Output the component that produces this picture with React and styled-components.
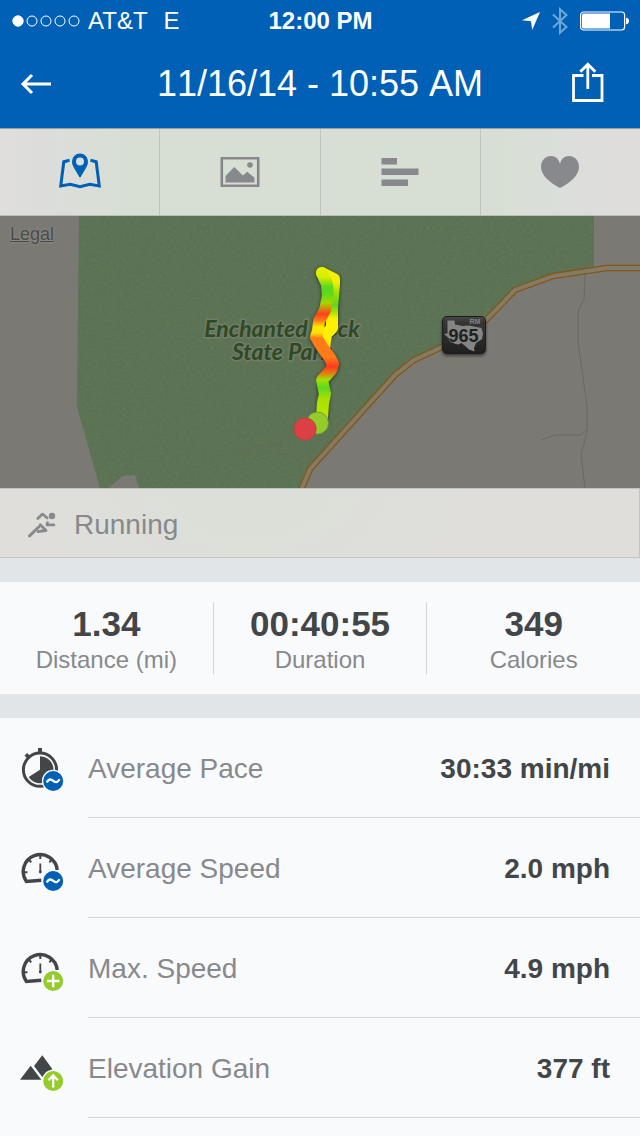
import React from 'react';
import styled, { createGlobalStyle } from 'styled-components';

const GlobalStyle = createGlobalStyle`
  * {
    box-sizing: border-box;
  }
  body {
    margin: 0;
    background: #f9fafc;
    font-family: 'Liberation Sans', Arial, sans-serif;
  }
  button {
    margin: 0;
    padding: 0;
    border: 0;
    background: none;
    color: inherit;
    font: inherit;
    cursor: pointer;
  }
  svg {
    display: block;
    flex-shrink: 0;
  }
`;

const Page = styled.div`
  display: flex;
  flex-direction: column;
  background: #e1e5e8;
  min-height: 100vh;
`;

const Header = styled.header`
  background: #0060b6;
  color: #ffffff;
`;

const StatusBar = styled.div`
  display: grid;
  grid-template-columns: 1fr auto 1fr;
  align-items: center;
  height: 40px;
  padding: 2px 11px 0 12px;
  font-size: 24px;
  line-height: 36px;
  .carrier {
    display: flex;
    align-items: center;
    gap: 8px;
  }
  .network {
    margin-left: 8px;
  }
  .time {
    font-weight: 700;
  }
  .indicators {
    display: flex;
    align-items: center;
    justify-content: flex-end;
    gap: 12px;
  }
`;

const NavBar = styled.div`
  display: grid;
  grid-template-columns: 1fr auto 1fr;
  align-items: center;
  height: 88px;
  padding: 0 36px 0 20px;
`;

const Title = styled.h1`
  margin: 0;
  padding-left: 16px;
  font-size: 36px;
  font-weight: 400;
  line-height: 44px;
  font-kerning: none;
`;

const NavButton = styled.button`
  justify-self: ${({ $end }) => ($end ? 'end' : 'start')};
`;

const Tabs = styled.nav`
  display: flex;
  height: 88px;
  border-top: 1px solid #9c9f99;
  border-bottom: 1px solid #b9beb6;
  background: linear-gradient(
    90deg,
    #dfdedc 0%,
    #dcdddb 6%,
    #d7dfd4 20%,
    #d7dfd4 78%,
    #dbdeda 88%,
    #dedddc 96%
  );
`;

const Tab = styled.button`
  display: flex;
  flex: 1;
  align-items: center;
  justify-content: center;
  color: ${({ $active }) => ($active ? '#0060b6' : '#87898c')};
  border-right: 1px solid #bfc4bd;
  &:last-child {
    border-right: 0;
  }
`;

const MapWrapper = styled.section`
  position: relative;
  height: 272px;
  overflow: hidden;
  background: #7b7974;
  .legal {
    position: absolute;
    left: 10px;
    top: 8px;
    font-size: 18px;
    line-height: 20px;
    color: #4a4946;
    text-shadow: 0 0 2px #a3a19c;
  }
`;

const Activity = styled.div`
  display: flex;
  align-items: center;
  gap: 18px;
  height: 70px;
  padding: 4px 0 0 28px;
  border: 1px solid #c3c4c4;
  border-left: 0;
  background: radial-gradient(
    ellipse 220px 130px at 250px 0,
    #dbdfd7,
    #dfdedb
  );
  color: #87898c;
  font-size: 28px;
  line-height: 36px;
`;

const Stats = styled.section`
  display: flex;
  margin: 24px 0;
  padding: 20px 0;
  background: #f9fafc;
`;

const Stat = styled.div`
  flex: 1;
  text-align: center;
  border-right: 1px solid #d3d6d9;
  &:last-child {
    border-right: 0;
  }
  .value {
    font-size: 35px;
    font-weight: 700;
    line-height: 44px;
    color: #424648;
  }
  .label {
    font-size: 24px;
    line-height: 28px;
    color: #87898c;
  }
`;

const Details = styled.section`
  flex: 1;
  background: #f9fafc;
`;

const DetailRow = styled.div`
  display: flex;
  align-items: center;
  gap: 24px;
  padding: 2px 0 0 20px;
  .content {
    display: flex;
    flex: 1;
    align-items: center;
    justify-content: space-between;
    height: 98px;
    padding-right: 30px;
    border-bottom: 1px solid #d3d6d9;
    font-size: 28px;
    color: #87898c;
  }
  .value {
    font-weight: 700;
    color: #424648;
  }
`;

const SignalDots = () => (
  <svg width="68" height="12" viewBox="0 0 68 12" fill="none" stroke="#fff">
    <circle cx="6" cy="6" r="5.2" fill="#fff" />
    <circle cx="20" cy="6" r="5" />
    <circle cx="34" cy="6" r="5" />
    <circle cx="48" cy="6" r="5" />
    <circle cx="62" cy="6" r="5" />
  </svg>
);

const LocationArrow = () => (
  <svg width="18" height="18" viewBox="0 0 18 18">
    <path d="M0 8.3 18 0 10.2 18 9 9.2z" fill="#fff" />
  </svg>
);

const Bluetooth = () => (
  <svg width="16" height="28" viewBox="0 0 16 28">
    <path
      d="M1 7.5 14.5 20 8 25.8V2.2L14.5 8 1 20.5"
      fill="none"
      stroke="#6fa6d8"
      strokeWidth="2"
    />
  </svg>
);

const Battery = () => (
  <svg width="49" height="20" viewBox="0 0 49 20">
    <rect
      x=".6"
      y="1"
      width="44"
      height="18"
      rx="3"
      fill="none"
      stroke="#fff"
      strokeWidth="1.2"
    />
    <path d="M3.5 2.5H30v15H3.5A1.5 1.5 0 0 1 2 16V4a1.5 1.5 0 0 1 1.5-1.500z" fill="#fff" />
    <path d="M46 6.700c4 0 4 6.600 0 6.600z" fill="#fff" />
  </svg>
);

const BackArrow = () => (
  <svg width="34" height="22" viewBox="0 0 34 22">
    <path
      d="M31 11H3M12 2 3 11l9 9"
      fill="none"
      stroke="#fff"
      strokeWidth="3"
    />
  </svg>
);

const ShareIcon = () => (
  <svg width="32" height="44" viewBox="0 0 32 44">
    <path
      d="M11.500 13.500H1.500v25h28.500v-25h-10M15.800 27V2.500M8.300 9.800l7.500-7.500 7.500 7.500"
      fill="none"
      stroke="#fff"
      strokeWidth="2.800"
    />
  </svg>
);

const MapIcon = () => (
  <svg width="42" height="38" viewBox="0 0 42 38">
    <path
      d="M10.500 7.300 4.800 8.800 1.700 33l9.600-1.800L21 33.600l9.700-2.400 9.600 1.800L37.200 8.800l-5.700-1.500"
      fill="none"
      stroke="currentColor"
      strokeWidth="3"
    />
    <path
      fillRule="evenodd"
      d="M21 .4a8 8 0 0 0-8 8c0 3 1 4.600 2.300 7L21 25l5.700-9.600c1.300-2.400 2.300-4 2.300-7a8 8 0 0 0-8-8zm0 4a4 4 0 1 1 0 8 4 4 0 0 1 0-8z"
      fill="currentColor"
    />
  </svg>
);

const PhotoIcon = () => (
  <svg width="40" height="30" viewBox="0 0 40 30" fill="currentColor">
    <rect
      x="1.800"
      y="1.200"
      width="36.400"
      height="27.600"
      fill="none"
      stroke="currentColor"
      strokeWidth="2.600"
    />
    <path d="M5.500 25.500V19l8.800-9 8.600 8.500 4.400-3.800 7.200 6v4.800z" />
    <circle cx="30" cy="8" r="2.800" />
  </svg>
);

const BarsIcon = () => (
  <svg width="38" height="28" viewBox="0 0 38 28" fill="currentColor">
    <path d="M.5 0H16v6.500H.5zM.5 10.500h37V17H.5zM.5 21.500h26.500V28H.5z" />
  </svg>
);

const HeartIcon = () => (
  <svg width="38" height="32" viewBox="0 0 38 32">
    <path
      d="M19 32C9 27 0 19.500 0 10.800 0 4.500 4.500 0 10 0c4.500 0 8 2.800 9 8.200C20 2.800 23.500 0 28 0c5.500 0 10 4.500 10 10.800C38 19.500 29 27 19 32z"
      fill="currentColor"
    />
  </svg>
);

const RunnerIcon = () => (
  <svg
    width="28"
    height="26"
    viewBox="0 0 28 26"
    fill="none"
    stroke="currentColor"
    strokeWidth="2.600"
    strokeLinecap="round"
    strokeLinejoin="round"
  >
    <circle cx="24" cy="4" r="3.200" fill="currentColor" stroke="none" />
    <path d="M9.800 6.500 14.500 2 19.300 6" />
    <path d="M1.500 23.800 10.700 15" strokeWidth="3" />
    <path d="M12.200 12.800 18 18.500 10 19.600" strokeWidth="2.800" />
    <path d="M19.500 10.500 18.800 12.900H26" />
  </svg>
);

const roadPath =
  'M301 274 310 253 395 159 414 144 442 131 486 104 515 74 553 60 607 52H640';

const TrailMap = () => (
  <svg
    width="100%"
    height="272"
    viewBox="0 0 640 272"
    preserveAspectRatio="xMidYMid slice"
  >
    <defs>
      <filter id="grain" x="0" y="0" width="100%" height="100%">
        <feTurbulence type="fractalNoise" baseFrequency="0.3 0.5" numOctaves="2" seed="4" />
        <feColorMatrix values="0 0 0 0 .5  0 0 0 0 .6  0 0 0 0 .48  1.2 0 0 0 -.5" />
        <feComposite in2="SourceGraphic" operator="in" />
      </filter>
      <linearGradient id="outbound" gradientUnits="userSpaceOnUse" x1="0" y1="52" x2="0" y2="140">
        <stop offset="0" stopColor="#f2f200" />
        <stop offset=".17" stopColor="#eef000" />
        <stop offset=".28" stopColor="#a0e000" />
        <stop offset=".42" stopColor="#5cd81e" />
        <stop offset=".5" stopColor="#a8e000" />
        <stop offset=".58" stopColor="#fff000" />
        <stop offset=".8" stopColor="#fff000" />
        <stop offset="1" stopColor="#ffd400" />
      </linearGradient>
      <linearGradient id="inbound" gradientUnits="userSpaceOnUse" x1="0" y1="50" x2="0" y2="210">
        <stop offset="0" stopColor="#e8f000" />
        <stop offset=".07" stopColor="#d8ec00" />
        <stop offset=".13" stopColor="#5cd81e" />
        <stop offset=".17" stopColor="#5cd81e" />
        <stop offset=".23" stopColor="#a4d800" />
        <stop offset=".3" stopColor="#ff4020" />
        <stop offset=".34" stopColor="#ff7a18" />
        <stop offset=".38" stopColor="#ffe600" />
        <stop offset=".42" stopColor="#ffe000" />
        <stop offset=".45" stopColor="#ff7b1a" />
        <stop offset=".57" stopColor="#ff7b1a" />
        <stop offset=".63" stopColor="#ff3a20" />
        <stop offset=".67" stopColor="#e07c10" />
        <stop offset=".71" stopColor="#a4e000" />
        <stop offset=".76" stopColor="#5ed820" />
        <stop offset=".83" stopColor="#a8e000" />
        <stop offset="1" stopColor="#c4ea00" />
      </linearGradient>
      <linearGradient id="shield" x1="0" y1="0" x2="0" y2="1">
        <stop offset="0" stopColor="#4a4a4a" />
        <stop offset=".15" stopColor="#363636" />
        <stop offset="1" stopColor="#202020" />
      </linearGradient>
      <filter id="soft" x="-50%" y="-20%" width="200%" height="140%">
        <feGaussianBlur stdDeviation="1.500" />
      </filter>
      <clipPath id="park">
        <path d="M79 0 77 191 100 272H108L123 260 135 259 139 272H302L310 253 395 159 414 144 442 131 486 104 515 74 553 60 594 54V0z" />
      </clipPath>
    </defs>

    <g clipPath="url(#park)">
      <rect width="640" height="272" fill="#5b7253" />
      <rect width="640" height="272" filter="url(#grain)" opacity=".14" />
    </g>

    {/* footpaths and creek */}
    <g fill="none" stroke="#68695f">
      <path d="M233 238 257 231 277 228 292 220M277 228 279 237 297 241 309 231M297 241 300 256M297 249 311 245 331 223" strokeDasharray="3 1" />
      <path d="M585 58 584 83 578 95V126L587 190V216L581 239 585 272M541 224 555 219H580L586 214" />
    </g>

    <path d={roadPath} fill="none" stroke="#80591c" strokeWidth="6.500" />
    <path d={roadPath} fill="none" stroke="#857a63" strokeWidth="3.800" />

    <g
      fill="#2e4a20"
      stroke="#737b6d"
      strokeWidth="3"
      paintOrder="stroke"
      strokeLinejoin="round"
      fontFamily="Lato, sans-serif"
      fontSize="23"
      fontWeight="700"
      fontStyle="italic"
      textAnchor="middle"
    >
      <text x="282" y="121">Enchanted Rock</text>
      <text x="282" y="144">State Park</text>
    </g>

    <g fill="none" strokeLinecap="round" strokeLinejoin="round">
      <g stroke="#26351f" strokeWidth="14" opacity=".6" filter="url(#soft)">
        <path d="M322 58 334 64V69L333 81 332 113 326 118 324 124" />
        <path d="M322 58 327 69 328 81 325 95 319 106 318 116 316 122 322 132 330 143 333 149 331 155 323 164 324 179 323 188 322 202" />
      </g>
      <path
        d="M322 57 334 63V68L333 80 332 92V112L326 118 324 132"
        stroke="url(#outbound)"
        strokeWidth="12"
      />
      <path
        d="M322 57 327 68 328 80 325 94 319 105 318 115 316 121 322 131 330 142 333 148 331 154 322 164 325 178 323 187 322 201"
        stroke="url(#inbound)"
        strokeWidth="12"
      />
    </g>
    <circle cx="317.500" cy="207" r="11" fill="#93cc2b" stroke="#6f8f35" strokeWidth=".8" />
    <circle cx="305" cy="213" r="11.200" fill="#dd4044" stroke="#a34a40" strokeWidth=".8" />

    <rect x="442" y="102" width="44" height="38" rx="5" fill="#000" opacity=".5" filter="url(#soft)" />
    <rect x="442.500" y="100.500" width="43" height="37" rx="4.500" fill="url(#shield)" stroke="#1c1c1c" />
    <path
      d="M447.500 104.500H454.500L455 108.500 462.500 110 469 109.500 481.500 112 483 117.500 482 123 476 127 474 132 474.500 135.500 469 133.500 464 129 461.500 127 458 128.500 454 127.500 450.500 123.500 444 118 447.500 117.500z"
      fill="#858585"
    />
    <text
      x="463.500"
      y="126"
      textAnchor="middle"
      fontFamily="'Liberation Sans Narrow', 'Liberation Sans', sans-serif"
      fontSize="18"
      fontWeight="700"
      fill="#202020"
      stroke="#858585"
      strokeWidth="1"
      paintOrder="stroke"
    >
      965
    </text>
    <text
      x="475"
      y="108"
      textAnchor="middle"
      fontFamily="'Liberation Sans', sans-serif"
      fontSize="7"
      fontWeight="700"
      fill="#858585"
    >
      RM
    </text>
  </svg>
);

const badges = {
  average: { color: '#0060b6', path: 'M26.800 35.500C29 31 31.500 32.500 33.500 34S37.500 36 39.600 32.300' },
  max: { color: '#93cc2b', path: 'M33.200 27.700V40.300M26.900 34H39.500' },
  gain: { color: '#93cc2b', path: 'M33.200 40.500V29M28.500 33.300 33.200 28.500 37.900 33.300' },
};

const Badge = ({ type }) => (
  <g>
    <circle cx="33.200" cy="34" r="11.300" fill="#f9fafc" />
    <circle cx="33.200" cy="34" r="10" fill={badges[type].color} />
    <path d={badges[type].path} fill="none" stroke="#fff" strokeWidth="2.300" />
  </g>
);

const Stopwatch = () => (
  <g>
    <circle cx="20" cy="22.700" r="16.600" fill="none" stroke="#424648" strokeWidth="3" />
    <path d="M18 1h4v5h-4zM4.500 8.500 7.200 6 10 9 7.300 11.500z" fill="#424648" />
    <path d="M20 22.700V9.200A13.500 13.500 0 1 1 8.700 30z" fill="#424648" />
  </g>
);

const Gauge = () => (
  <g fill="none" stroke="#424648">
    <path d="M21.300 33.200 6.400 34.400A17 17 0 1 1 37.200 23" strokeWidth="3.400" />
    <path d="M20.300 8v4M8.500 12.500 11.300 15.300M32.100 12.500 29.300 15.300M3.500 25.200h4M33.500 25.200h3" strokeWidth="2" />
    <path d="M20.300 16.500V25" strokeWidth="1.800" />
    <circle cx="20.300" cy="25" r="1.400" fill="#424648" stroke="none" />
  </g>
);

const Mountains = () => (
  <path
    d="M0 32.700 10.700 18.700 21.300 32.700zM22.300 8.300 32.300 22 22.300 30 14 19z"
    fill="#424648"
  />
);

const tabs = [
  { name: 'Map', Icon: MapIcon },
  { name: 'Photos', Icon: PhotoIcon },
  { name: 'Splits', Icon: BarsIcon },
  { name: 'Heart rate', Icon: HeartIcon },
];

const stats = [
  { value: '1.34', label: 'Distance (mi)' },
  { value: '00:40:55', label: 'Duration' },
  { value: '349', label: 'Calories' },
];

const details = [
  { label: 'Average Pace', value: '30:33 min/mi', Icon: Stopwatch, badge: 'average' },
  { label: 'Average Speed', value: '2.0 mph', Icon: Gauge, badge: 'average' },
  { label: 'Max. Speed', value: '4.9 mph', Icon: Gauge, badge: 'max' },
  { label: 'Elevation Gain', value: '377 ft', Icon: Mountains, badge: 'gain' },
];

const App = () => (
  <Page>
    <GlobalStyle />
    <Header>
      <StatusBar>
        <div className="carrier">
          <SignalDots />
          <span>AT&amp;T</span>
          <span className="network">E</span>
        </div>
        <div className="time">12:00 PM</div>
        <div className="indicators">
          <LocationArrow />
          <Bluetooth />
          <Battery />
        </div>
      </StatusBar>
      <NavBar>
        <NavButton type="button" aria-label="Back">
          <BackArrow />
        </NavButton>
        <Title>11/16/14 - 10:55 AM</Title>
        <NavButton type="button" aria-label="Share" $end>
          <ShareIcon />
        </NavButton>
      </NavBar>
    </Header>

    <Tabs>
      {tabs.map(({ name, Icon }, index) => (
        <Tab key={name} type="button" aria-label={name} $active={index === 0}>
          <Icon />
        </Tab>
      ))}
    </Tabs>

    <MapWrapper>
      <TrailMap />
      <a className="legal" href="#legal">
        Legal
      </a>
    </MapWrapper>

    <Activity>
      <RunnerIcon />
      <span>Running</span>
    </Activity>

    <Stats>
      {stats.map(({ value, label }) => (
        <Stat key={label}>
          <div className="value">{value}</div>
          <div className="label">{label}</div>
        </Stat>
      ))}
    </Stats>

    <Details>
      {details.map(({ label, value, Icon, badge }) => (
        <DetailRow key={label}>
          <svg width="44" height="44" viewBox="0 0 44 44">
            <Icon />
            <Badge type={badge} />
          </svg>
          <div className="content">
            <span>{label}</span>
            <span className="value">{value}</span>
          </div>
        </DetailRow>
      ))}
    </Details>
  </Page>
);

export default App;
